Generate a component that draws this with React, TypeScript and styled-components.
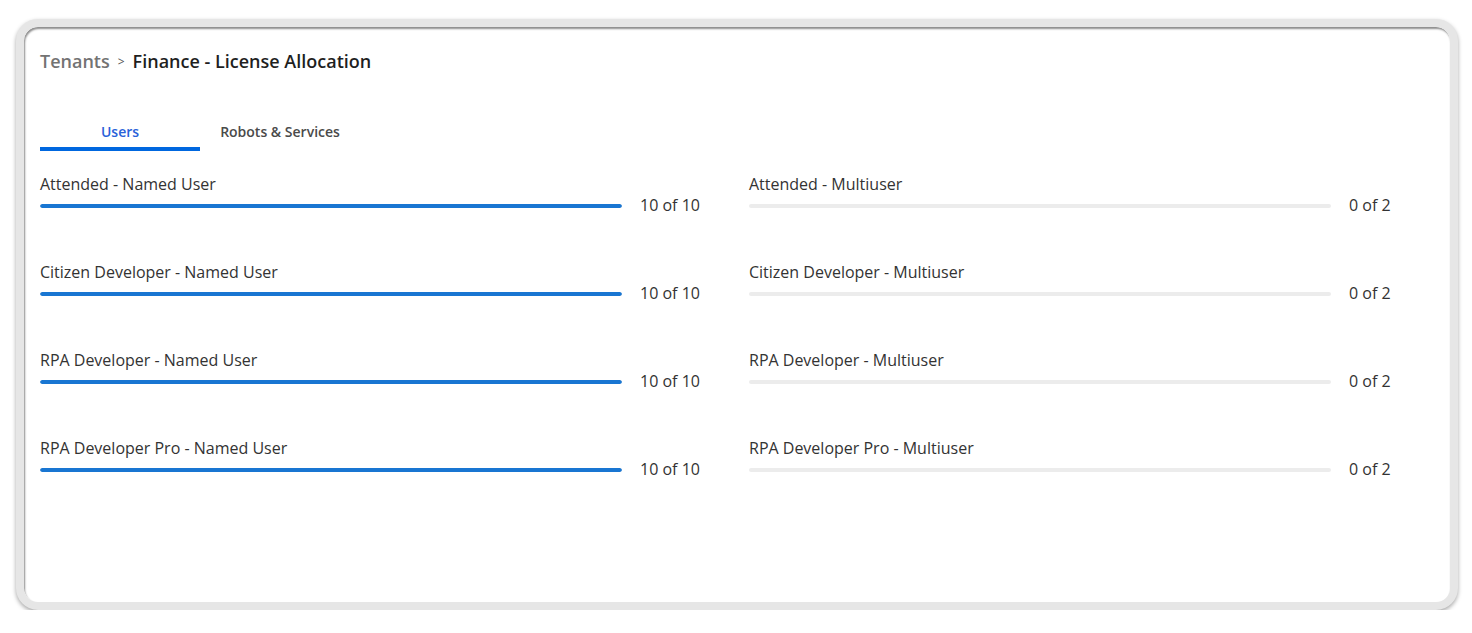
import React, { FC } from 'react';
import styled, { createGlobalStyle } from 'styled-components';

type License = {
    name: string;
    used: number;
    total: number;
};

const named: License[] = [
    { name: 'Attended - Named User', used: 10, total: 10 },
    { name: 'Citizen Developer - Named User', used: 10, total: 10 },
    { name: 'RPA Developer - Named User', used: 10, total: 10 },
    { name: 'RPA Developer Pro - Named User', used: 10, total: 10 },
];

const multi: License[] = [
    { name: 'Attended - Multiuser', used: 0, total: 2 },
    { name: 'Citizen Developer - Multiuser', used: 0, total: 2 },
    { name: 'RPA Developer - Multiuser', used: 0, total: 2 },
    { name: 'RPA Developer Pro - Multiuser', used: 0, total: 2 },
];

const LicenseItem: FC<{ item: License }> = ({ item }) => (
    <Item>
        <ItemLabel>{item.name}</ItemLabel>
        <BarRow>
            <Track>
                <Fill style={{ width: `${(item.used / item.total) * 100}%` }} />
            </Track>
            <Count>{item.used} of {item.total}</Count>
        </BarRow>
    </Item>
);

const App: FC = () => {
    // interleave so the grid fills row by row
    const rows = named.flatMap((n, i) => [n, multi[i]]);

    return (
        <>
            <GlobalStyle />
            <Frame>
                <Breadcrumb>
                    <Crumb>Tenants</Crumb>
                    <Separator>&gt;</Separator>
                    <Title>Finance - License Allocation</Title>
                </Breadcrumb>
                <Tabs>
                    <Tab $active>Users</Tab>
                    <Tab>Robots &amp; Services</Tab>
                </Tabs>
                <Grid>
                    {rows.map(item => (
                        <LicenseItem key={item.name} item={item} />
                    ))}
                </Grid>
            </Frame>
        </>
    );
};

export default App;

// Styled Components
const GlobalStyle = createGlobalStyle`
  html, body {
    margin: 0;
    padding: 0;
    background: #ffffff;
  }
  body {
    font-family: "Open Sans", "Noto Sans", sans-serif;
    color: #333;
  }
`;

const Frame = styled.div`
  box-sizing: border-box;
  margin: 19px 0 0 16px;
  width: 1442px;
  height: 591px;
  border: 8px solid #e6e6e6;
  border-radius: 22px;
  background: #fff;
  box-shadow: inset 1px 2px 2px rgba(0, 0, 0, 0.45), 0 2px 4px rgba(0, 0, 0, 0.35);
  padding: 21px 16px 0 16px;
`;

const Breadcrumb = styled.div`
  display: flex;
  align-items: center;
  height: 26px;
`;

const Crumb = styled.span`
  font-size: 18px;
  font-weight: 600;
  color: #737373;
`;

const Separator = styled.span`
  font-size: 12px;
  color: #555;
  margin: 0 8px 0 8px;
`;

const Title = styled.span`
  font-size: 18px;
  font-weight: 600;
  color: #1f1f1f;
`;

const Tabs = styled.div`
  display: flex;
  margin-top: 33px;
`;

const Tab = styled.div<{ $active?: boolean }>`
  width: 160px;
  height: 44px;
  box-sizing: border-box;
  display: flex;
  align-items: center;
  justify-content: center;
  font-size: 14px;
  font-weight: 600;
  color: ${p => (p.$active ? '#2a62d9' : '#4a4a4a')};
  border-bottom: 4px solid ${p => (p.$active ? '#0067df' : 'transparent')};
  padding-top: 8px;
`;

const Grid = styled.div`
  display: grid;
  grid-template-columns: 660px 660px;
  column-gap: 49px;
  row-gap: 44px;
  margin-top: 22px;
`;

const Item = styled.div`
  display: flex;
  flex-direction: column;
`;

const ItemLabel = styled.div`
  font-size: 16px;
  line-height: 22px;
  color: #333;
`;

const BarRow = styled.div`
  display: flex;
  align-items: center;
  height: 22px;
`;

const Track = styled.div`
  flex: 0 0 582px;
  height: 4px;
  border-radius: 2px;
  background: #ececec;
  overflow: hidden;
`;

const Fill = styled.div`
  height: 100%;
  border-radius: 2px;
  background: #1976d2;
`;

const Count = styled.div`
  margin: 0 0 3px 18px;
  font-size: 16px;
  color: #333;
  white-space: nowrap;
`;
